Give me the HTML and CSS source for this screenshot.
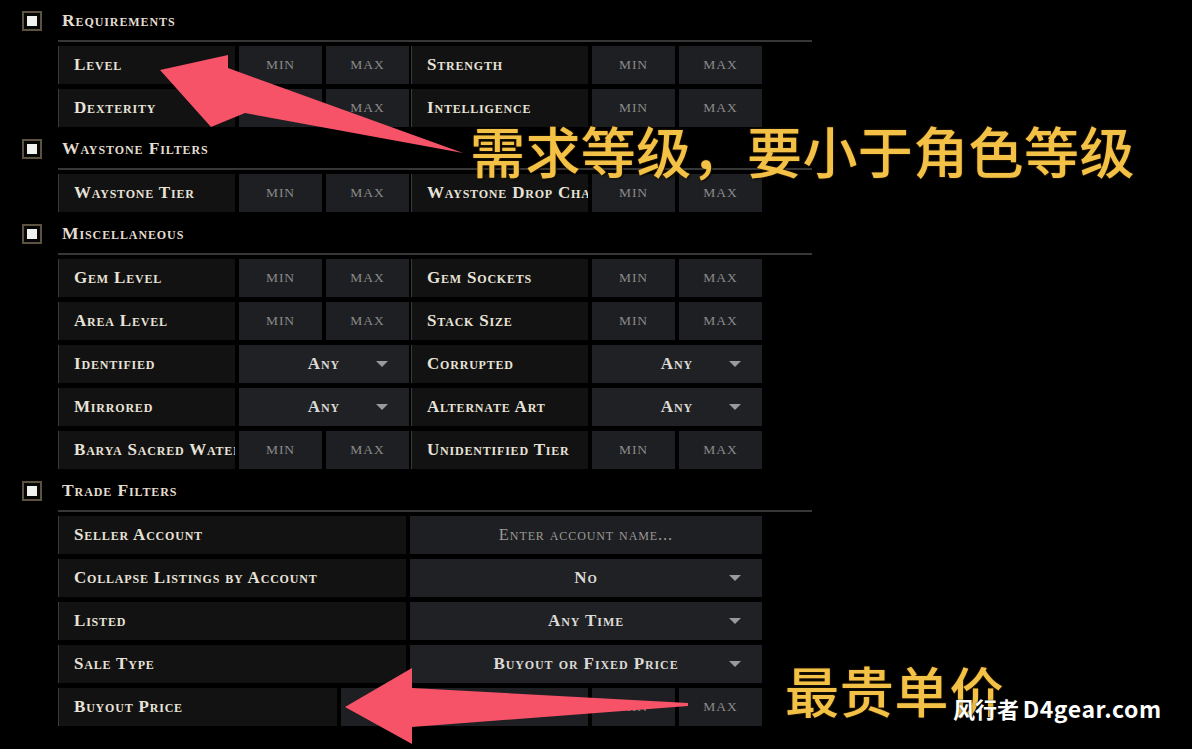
FILE: index.html
```html
<!DOCTYPE html>
<html lang="en">
<head>
<meta charset="utf-8">
<title>Trade filters</title>
<link rel="stylesheet" href="styles.css">
</head>
<body>
<div class="page">
  <section class="sec">
    <div class="sec-head"><span class="cb"><span class="cb-in"></span></span><div class="sec-title">Requirements</div></div>
    <div class="rows">
      <div class="row pair">
        <div class="half"><div class="lbl">Level</div><div class="inp">MIN</div><div class="inp">MAX</div></div>
        <div class="half"><div class="lbl">Strength</div><div class="inp">MIN</div><div class="inp">MAX</div></div>
      </div>
      <div class="row pair">
        <div class="half"><div class="lbl">Dexterity</div><div class="inp">MIN</div><div class="inp">MAX</div></div>
        <div class="half"><div class="lbl">Intelligence</div><div class="inp">MIN</div><div class="inp">MAX</div></div>
      </div>
    </div>
  </section>

  <section class="sec">
    <div class="sec-head"><span class="cb"><span class="cb-in"></span></span><div class="sec-title">Waystone Filters</div></div>
    <div class="rows">
      <div class="row pair">
        <div class="half"><div class="lbl">Waystone Tier</div><div class="inp">MIN</div><div class="inp">MAX</div></div>
        <div class="half"><div class="lbl">Waystone Drop Chance</div><div class="inp">MIN</div><div class="inp">MAX</div></div>
      </div>
    </div>
  </section>

  <section class="sec">
    <div class="sec-head"><span class="cb"><span class="cb-in"></span></span><div class="sec-title">Miscellaneous</div></div>
    <div class="rows">
      <div class="row pair">
        <div class="half"><div class="lbl">Gem Level</div><div class="inp">MIN</div><div class="inp">MAX</div></div>
        <div class="half"><div class="lbl">Gem Sockets</div><div class="inp">MIN</div><div class="inp">MAX</div></div>
      </div>
      <div class="row pair">
        <div class="half"><div class="lbl">Area Level</div><div class="inp">MIN</div><div class="inp">MAX</div></div>
        <div class="half"><div class="lbl">Stack Size</div><div class="inp">MIN</div><div class="inp">MAX</div></div>
      </div>
      <div class="row pair">
        <div class="half"><div class="lbl">Identified</div><div class="dd"><span class="val">Any</span><span class="caret"></span></div></div>
        <div class="half"><div class="lbl">Corrupted</div><div class="dd"><span class="val">Any</span><span class="caret"></span></div></div>
      </div>
      <div class="row pair">
        <div class="half"><div class="lbl">Mirrored</div><div class="dd"><span class="val">Any</span><span class="caret"></span></div></div>
        <div class="half"><div class="lbl">Alternate Art</div><div class="dd"><span class="val">Any</span><span class="caret"></span></div></div>
      </div>
      <div class="row pair">
        <div class="half"><div class="lbl">Barya Sacred Water</div><div class="inp">MIN</div><div class="inp">MAX</div></div>
        <div class="half"><div class="lbl">Unidentified Tier</div><div class="inp">MIN</div><div class="inp">MAX</div></div>
      </div>
    </div>
  </section>

  <section class="sec">
    <div class="sec-head"><span class="cb"><span class="cb-in"></span></span><div class="sec-title">Trade Filters</div></div>
    <div class="rows">
      <div class="row wide"><div class="lbl">Seller Account</div><div class="inp ph">Enter account name...</div></div>
      <div class="row wide"><div class="lbl">Collapse Listings by Account</div><div class="dd full"><span class="val">No</span><span class="caret"></span></div></div>
      <div class="row wide"><div class="lbl">Listed</div><div class="dd full"><span class="val">Any Time</span><span class="caret"></span></div></div>
      <div class="row wide"><div class="lbl">Sale Type</div><div class="dd full"><span class="val">Buyout or Fixed Price</span><span class="caret"></span></div></div>
      <div class="row buy"><div class="lbl">Buyout Price</div><div class="inp"></div><div class="inp">MIN</div><div class="inp">MAX</div></div>
    </div>
  </section>
</div>

<svg class="arrows" width="1192" height="749" viewBox="0 0 1192 749" aria-hidden="true">
  <polygon points="160,70 228,55 228,68 463,153 245,113 211,127" fill="#f65268"/>
  <polygon points="345,707 412,668 412,688 688,703 688,706 412,727 412,744" fill="#f65268"/>
</svg>

<div class="note note-1">需求等级，要小于角色等级</div>
<div class="note note-2">最贵单价</div>
<div class="mark"><span class="mark-cn">风行者</span> <span class="mark-en">D4gear.com</span></div>
</body>
</html>
```

FILE: styles.css
```css
html, body {
  margin: 0;
  padding: 0;
  background: #000;
}
body {
  width: 1192px;
  height: 749px;
  overflow: hidden;
  position: relative;
  font-family: "Liberation Serif", "DejaVu Serif", serif;
  color: #e6e1d6;
}
.page {
  padding-left: 22px;
  display: flex;
  flex-direction: column;
  gap: 1px;
}
.sec-head {
  display: flex;
  align-items: center;
  height: 42px;
}
.cb {
  width: 20px;
  height: 20px;
  box-sizing: border-box;
  border: 2px solid #5c5240;
  background: #050505;
  display: flex;
  align-items: center;
  justify-content: center;
  margin-right: 16px;
  flex: 0 0 auto;
}
.cb-in {
  width: 10px;
  height: 10px;
  background: #f1f1f1;
}
.sec-title {
  flex: 0 0 754px;
  height: 42px;
  box-sizing: border-box;
  border-bottom: 2px solid #373737;
  display: flex;
  align-items: center;
  padding-left: 4px;
  font-weight: bold;
  font-variant: small-caps;
  font-size: 17.5px;
  letter-spacing: 0.9px;
  color: #e2ddd0;
}
.rows {
  margin-left: 36px;
  margin-top: 4px;
  width: 704px;
  display: flex;
  flex-direction: column;
  gap: 5px;
}
.row {
  height: 38px;
}
.pair {
  display: grid;
  grid-template-columns: 1fr 1fr;
  column-gap: 2px;
}
.half {
  display: grid;
  grid-template-columns: 177px 1fr 1fr;
  column-gap: 4px;
}
.wide {
  display: grid;
  grid-template-columns: 348px 1fr;
  column-gap: 4px;
}
.buy {
  display: grid;
  grid-template-columns: 279px 1fr 83px 83px;
  column-gap: 4px;
}
.lbl {
  background: #121213;
  border-left: 1px solid #3a3a3a;
  padding-left: 15px;
  display: flex;
  align-items: center;
  white-space: nowrap;
  overflow: hidden;
  font-weight: bold;
  font-variant: small-caps;
  font-size: 17px;
  letter-spacing: 0.8px;
  color: #e8e3d8;
}
.inp {
  background: #1e1f22;
  display: flex;
  align-items: center;
  justify-content: center;
  font-size: 13.5px;
  letter-spacing: 1px;
  color: #8a8a8a;
}
.inp.ph {
  font-variant: small-caps;
  font-size: 16.5px;
  letter-spacing: 0.9px;
  color: #9c9a96;
}
.dd {
  grid-column: span 2;
  background: #202124;
  display: grid;
  grid-template-columns: 1fr auto 1fr;
  align-items: center;
}
.dd.full {
  grid-column: auto;
}
.val {
  grid-column: 2;
  font-weight: bold;
  font-variant: small-caps;
  font-size: 17px;
  letter-spacing: 0.9px;
  color: #dcdad6;
  white-space: nowrap;
}
.caret {
  grid-column: 3;
  justify-self: end;
  margin-right: 21px;
  width: 0;
  height: 0;
  border-left: 6px solid transparent;
  border-right: 6px solid transparent;
  border-top: 6px solid #9a9a9a;
}
.arrows {
  position: absolute;
  left: 0;
  top: 0;
  pointer-events: none;
}
.note {
  position: absolute;
  font-family: "Noto Sans CJK SC", "Noto Sans", sans-serif;
  font-weight: 500;
  line-height: 1;
  color: #f3c146;
  white-space: nowrap;
  text-shadow: 0 0 2px #5a3a00, 1px 1px 2px rgba(0, 0, 0, 0.9);
}
.note-1 {
  left: 470px;
  top: 122px;
  font-size: 55px;
  letter-spacing: 0.4px;
}
.note-2 {
  left: 785px;
  top: 663px;
  font-size: 54px;
  letter-spacing: 0.8px;
}
.mark {
  position: absolute;
  left: 953px;
  top: 697px;
  font-family: "Noto Sans CJK SC", "Noto Sans", sans-serif;
  font-weight: bold;
  line-height: 1;
  color: #fff;
  white-space: nowrap;
  text-shadow: 0 0 2px rgba(0, 0, 0, 0.8);
}
.mark-cn {
  font-size: 22px;
}
.mark-en {
  font-size: 23px;
  letter-spacing: 0.6px;
}
```
